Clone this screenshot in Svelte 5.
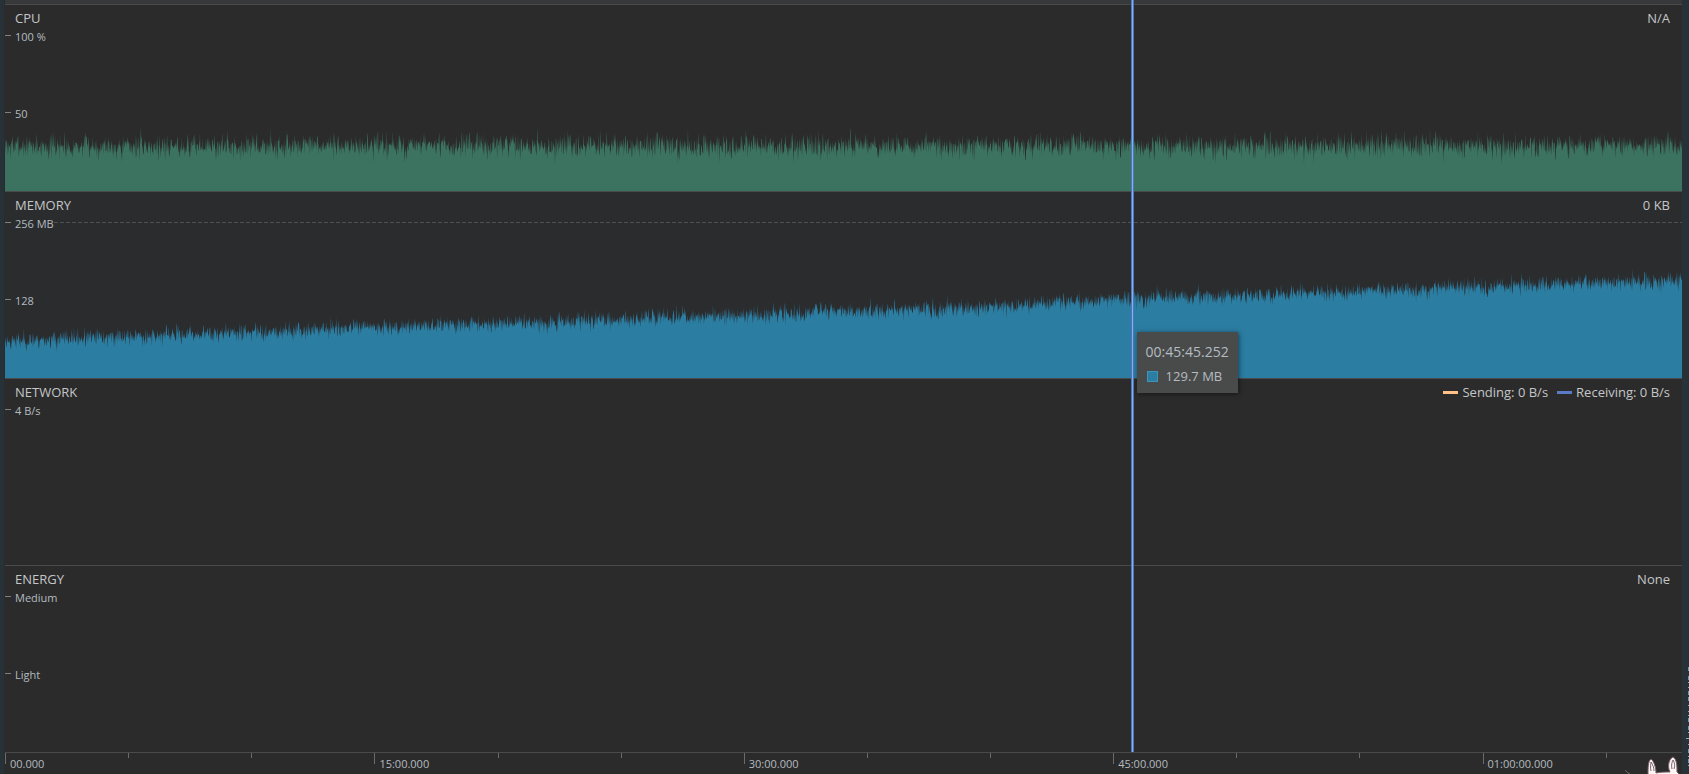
<script>
  // Visible time range of the session, in seconds
  const duration = 4086;
  const cursorTime = 2745;

  const chartWidth = 1677;
  const chartHeight = 186;
  const samples = duration;

  const cpuLevels = [[0, 45], [1, 45]];
  const memoryLevels = [
    [0, 37],
    [0.13, 45],
    [0.22, 51],
    [0.32, 56],
    [0.45, 64],
    [0.58, 71],
    [0.67, 79],
    [0.77, 84],
    [0.87, 91],
    [1, 98],
  ];

  // Small seeded generator, so the charts look the same on every load
  function createRandom(seed) {
    return () => {
      seed = (seed * 1664525 + 1013904223) % 4294967296;
      return seed / 4294967296;
    };
  }

  function levelAt(levels, position) {
    for (let i = 1; i < levels.length; i++) {
      const [start, from] = levels[i - 1];
      const [end, to] = levels[i];
      if (position <= end) {
        return from + ((to - from) * (position - start)) / (end - start);
      }
    }
    return levels[levels.length - 1][1];
  }

  // Build the filled area below the samples
  function makeArea(levels, spread, seed) {
    const random = createRandom(seed);
    let path = `M0 ${chartHeight}`;
    for (let i = 0; i <= samples; i++) {
      const position = i / samples;
      const noise = random() + random() + random() + random() - 2;
      const y = chartHeight - levelAt(levels, position) - noise * spread;
      path += `L${(position * chartWidth).toFixed(2)} ${y.toFixed(1)}`;
    }
    return `${path}L${chartWidth} ${chartHeight}Z`;
  }

  const monitors = [
    {
      name: "CPU",
      value: "N/A",
      scale: ["100 %", "50"],
      area: makeArea(cpuLevels, 11, 7),
      color: "green",
    },
    {
      name: "MEMORY",
      value: "0 KB",
      scale: ["256 MB", "128"],
      area: makeArea(memoryLevels, 8, 23),
      color: "blue",
      limit: true,
    },
    {
      name: "NETWORK",
      scale: ["4 B/s"],
      legend: [
        { label: "Sending: 0 B/s", color: "orange" },
        { label: "Receiving: 0 B/s", color: "indigo" },
      ],
    },
    { name: "ENERGY", value: "None", scale: ["Medium", "Light"] },
  ];

  const majorLabels = ["00.000", "15:00.000", "30:00.000", "45:00.000", "01:00:00.000"];

  // One tick every five minutes, every third one has a label
  const ticks = [];
  for (let time = 0; time < duration; time += 300) {
    ticks.push({
      time,
      label: time % 900 === 0 ? majorLabels[time / 900] : "",
    });
  }

  const toPercent = (time) => (time / duration) * 100;
</script>

<div class="profiler">
  <main class="panel">
    <div class="monitors">
      {#each monitors as monitor (monitor.name)}
        <section class="monitor" class:tinted={monitor.limit}>
          {#if monitor.area}
            <svg
              class={`chart ${monitor.color}`}
              viewBox={`0 0 ${chartWidth} ${chartHeight}`}
              preserveAspectRatio="none"
              aria-hidden="true"
            >
              <path d={monitor.area} />
            </svg>
          {/if}
          <header>
            <h2>{monitor.name}</h2>
            {#if monitor.legend}
              <ul class="legend">
                {#each monitor.legend as item (item.label)}
                  <li><span class={`key ${item.color}`}></span>{item.label}</li>
                {/each}
              </ul>
            {:else}
              <span>{monitor.value}</span>
            {/if}
          </header>
          <div class="scale">
            {#each monitor.scale as mark, i (mark)}
              <div class="mark">
                <span class="mark-label">{mark}</span>
                {#if monitor.limit && i === 0}
                  <span class="limit"></span>
                {/if}
              </div>
            {/each}
          </div>
        </section>
      {/each}

      <!-- Time cursor with its tooltip -->
      <div class="cursor" style={`left: ${toPercent(cursorTime)}%`}>
        <div class="tooltip">
          <time>00:45:45.252</time>
          <div class="reading"><span class="swatch"></span>129.7 MB</div>
        </div>
      </div>
    </div>

    <footer class="timeline">
      {#each ticks as tick (tick.time)}
        <div
          class="tick"
          class:major={tick.label}
          style={`left: ${toPercent(tick.time)}%`}
        >
          {tick.label}
        </div>
      {/each}
      <svg class="mascot" viewBox="0 0 62 20" aria-hidden="true">
        <path class="hair" d="M7 16l3 3 2 1" />
        <path
          class="ear"
          d="M30 21C30 14 30 7 33 5c3 2 5 9 5 14 4-1 9-1 14-1-3-6-1-13 3-15 4 2 4 10 4 15l3 3z"
        />
        <path class="inner" d="M33 17c-1-4 0-7 0-9 2 3 3 6 3 9M54 15c-1-4 0-7 1-9 2 3 2 6 1 9" />
      </svg>
    </footer>
  </main>
  <aside class="edge">
    <!-- Cut-off marks of the neighbouring pane -->
    <svg class="marks" viewBox="0 0 3 100" aria-hidden="true">
      <path
        class="thick"
        d="M2.5 0v4M2.5 9v4M2.5 24v4M2.5 30v4M2.5 51v4M2.5 59v4M2.5 82v4M2.5 92v4"
      />
      <path class="thin" d="M2 15.500h1M2 20.500h1M2 38.500h1M2 44.500h1M2 48.500h1M2 65.500h1M0 71.500h3M2 77.500h1M2 89.500h1M2 98.500h1" />
    </svg>
  </aside>
</div>

<style>
  :global(body) {
    background-color: #2b2b2b;
  }

  .profiler {
    display: flex;
    height: 100vh;
    box-sizing: border-box;
    overflow: hidden;
    border-left: 4px solid #263238;
    background-color: #2b2b2b;
    color: #c4c6c8;
    font-family: "Open Sans", "Noto Sans", sans-serif;
    font-size: 13px;
    line-height: 18px;
  }

  .panel {
    flex: 1;
    min-width: 0;
    display: flex;
    flex-direction: column;
    padding-left: 1px;
  }

  .monitors {
    position: relative;
    flex: 1;
    display: grid;
    grid-auto-rows: 1fr;
    border-top: 4px solid #37383a;
  }

  .monitor {
    position: relative;
    min-height: 0;
    border-top: 1px solid #484a4b;
  }

  .tinted {
    background-color: #2b2c2e;
  }

  .chart {
    position: absolute;
    inset: 0;
    width: 100%;
    height: 100%;
  }

  .chart.green {
    fill: #3b7360;
  }

  .chart.blue {
    fill: #2b7da2;
  }

  header {
    position: relative;
    display: flex;
    justify-content: space-between;
    padding: 4px 12px 0 10px;
  }

  h2 {
    margin: 0;
    font-size: 13px;
    font-weight: 400;
  }

  .legend {
    display: flex;
    gap: 9px;
    margin: 0;
    padding: 0;
    list-style: none;
  }

  .legend li {
    display: flex;
    align-items: center;
    gap: 4px;
  }

  .key {
    width: 15px;
    height: 3px;
  }

  .key.orange {
    background-color: #ffc187;
  }

  .key.indigo {
    background-color: #587bc4;
  }

  .scale {
    position: relative;
    padding-top: 8px;
    color: #b4bbc0;
    font-size: 11px;
    line-height: 14px;
  }

  .mark {
    display: flex;
    height: 77px;
  }

  .mark::before {
    content: "";
    width: 6px;
    height: 1px;
    margin-right: 4px;
    background-color: #808080;
  }

  .limit {
    flex: 1;
    height: 1px;
    background: repeating-linear-gradient(
      to right,
      #4f5052 0 4px,
      transparent 4px 6px
    );
  }

  .mark-label {
    margin-top: -5px;
  }

  .cursor {
    position: absolute;
    top: -4px;
    bottom: 0;
    width: 1px;
    border: 1px solid #4f76b9;
    border-width: 0 1px;
    margin-left: -1px;
    background-color: #7fb0f5;
  }

  .tooltip {
    position: absolute;
    top: 332px;
    left: 5px;
    padding: 11px 9px 8px;
    background-color: #494b4a;
    box-shadow: 1px 1px 5px rgba(0, 0, 0, 0.5);
    color: #b4bcc2;
    font-size: 14px;
    line-height: 18px;
    white-space: nowrap;
  }

  .reading {
    display: flex;
    align-items: center;
    gap: 8px;
    margin-top: 6px;
    font-size: 13px;
  }

  .swatch {
    width: 9px;
    height: 9px;
    margin-left: 1px;
    border: 1px solid #3c93bb;
    background-color: #2b7da2;
  }

  .timeline {
    position: relative;
    height: 21px;
    border-top: 1px solid #484a4b;
    overflow: hidden;
    color: #b4bbc0;
    font-size: 11px;
    line-height: 22px;
  }

  .tick {
    position: absolute;
    top: 0;
    height: 5px;
    padding-left: 4px;
    border-left: 1px solid #6b6b6b;
  }

  .major {
    height: 11px;
  }

  .mascot {
    position: absolute;
    right: 2px;
    bottom: 0;
    width: 62px;
    height: 20px;
  }

  .mascot path {
    fill: none;
    stroke: #75606a;
  }

  .mascot .ear {
    fill: #fff5f5;
  }

  .edge {
    display: flex;
    flex-direction: column;
    justify-content: flex-end;
    align-items: flex-end;
    width: 7px;
    padding-bottom: 7px;
    background-color: #263238;
  }

  .marks {
    width: 3px;
    height: 100px;
  }

  .thick {
    stroke: #5aa3b8;
  }

  .thin {
    stroke: #7fb2c0;
  }
</style>
